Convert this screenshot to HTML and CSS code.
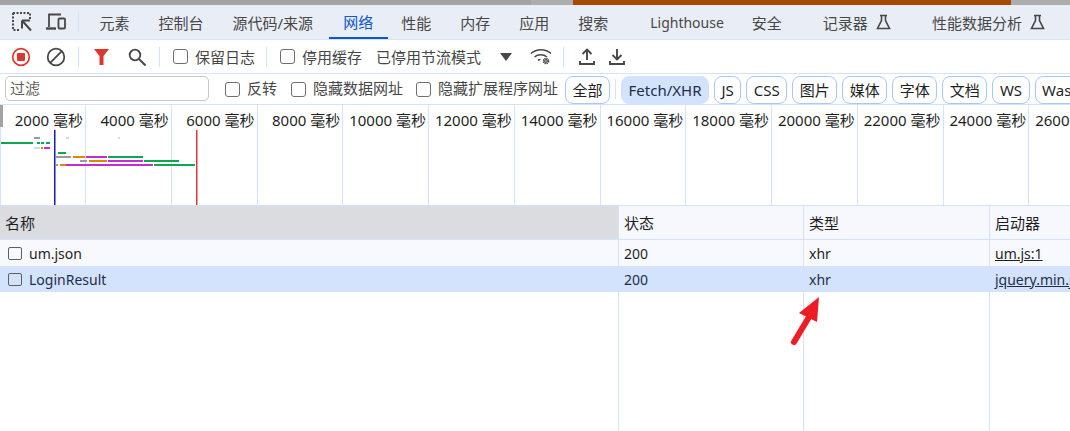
FILE: index.html
```html
<!DOCTYPE html>
<html lang="zh">
<head>
<meta charset="utf-8">
<title>网络</title>
<link rel="stylesheet" href="styles.css">
</head>
<body>
<div class="app">
  <div class="strip"><div class="strip-a"></div><div class="strip-b"></div><div class="strip-c"></div><div class="strip-d"></div></div>
  <div class="tabbar">
    <button class="ico first"><svg width="20" height="20" viewBox="0 0 20 20" fill="none" stroke="#474747"><path d="M1 1h17v6M1 1v17h6" stroke-width="2" stroke-dasharray="2 1.500"/><path d="M10 8.500h8M10 8.500v8M10.500 9l8.500 9.500" stroke-width="2"/></svg></button>
    <button class="ico second"><svg width="20" height="18" viewBox="0 0 20 18" fill="none" stroke="#474747" stroke-width="1.800"><path d="M3 14V1.500h12"/><path d="M0 15.500h10" stroke-width="2.400"/><rect x="12.500" y="5.500" width="6.500" height="10" rx="1"/></svg></button>
    <span class="sep tabsep"></span>
    <span class="tab">元素</span><span class="tab">控制台</span><span class="tab">源代码/来源</span><span class="tab active">网络</span><span class="tab">性能</span><span class="tab">内存</span><span class="tab">应用</span><span class="tab">搜索</span>
    <span class="tab far latin">Lighthouse</span><span class="tab">安全</span>
    <span class="tab far">记录器<svg class="flask" width="15" height="16" viewBox="0 0 15 16" fill="none" stroke="#474747" stroke-width="1.600"><path d="M4 1.500h7M5.500 1.500v5L1.500 14.500h12L9.500 6.500v-5"/></svg></span>
    <span class="tab far2">性能数据分析<svg class="flask" width="15" height="16" viewBox="0 0 15 16" fill="none" stroke="#474747" stroke-width="1.600"><path d="M4 1.500h7M5.500 1.500v5L1.500 14.500h12L9.500 6.500v-5"/></svg></span>
  </div>
  <div class="toolbar">
    <button class="ico rec"><svg width="20" height="20" viewBox="0 0 20 20"><circle cx="10" cy="10" r="8.300" fill="none" stroke="#dc362e" stroke-width="1.700"/><rect x="6" y="6" width="8" height="8" rx="1" fill="#dc362e"/></svg></button>
    <button class="ico clear"><svg width="20" height="20" viewBox="0 0 20 20" fill="none" stroke="#474747" stroke-width="1.800"><circle cx="10" cy="10" r="8.300"/><path d="M4.200 15.800L15.800 4.200"/></svg></button>
    <span class="sep s1"></span>
    <button class="ico funnel"><svg width="15" height="16" viewBox="0 0 15 16"><path d="M0 0h15l-5.500 7v9h-4v-9z" fill="#dc362e"/></svg></button>
    <button class="ico search"><svg width="18" height="18" viewBox="0 0 18 18" fill="none" stroke="#474747" stroke-width="1.800"><circle cx="7" cy="7" r="5.300"/><path d="M11 11l6.500 6.500" stroke-width="2"/></svg></button>
    <span class="sep s2"></span>
    <label class="check c1"><span class="box"></span>保留日志</label>
    <span class="sep s3"></span>
    <label class="check c2"><span class="box"></span>停用缓存</label>
    <span class="throttle">已停用节流模式</span>
    <span class="caret"></span>
    <button class="ico wifi"><svg width="22" height="18" viewBox="0 0 22 18" fill="none" stroke="#474747" stroke-width="1.600"><path d="M1 5.500c5.500-5 14.500-5 20 0M4.500 9c3.500-3 9-3 12.500 0M8 12.500c.8-.8 1.700-1 2.500-1"/><circle cx="16" cy="13" r="1.300" stroke-width="1.200"/><circle cx="16" cy="13" r="2.600" stroke-width="1.400" stroke-dasharray="1.400 .65"/></svg></button>
    <span class="sep s4"></span>
    <button class="ico up"><svg width="16" height="18" viewBox="0 0 16 18" fill="none" stroke="#474747" stroke-width="1.900"><path d="M8 12V2M3.500 6L8 1.500 12.500 6M1 13v3h14v-3"/></svg></button>
    <button class="ico down"><svg width="16" height="18" viewBox="0 0 16 18" fill="none" stroke="#474747" stroke-width="1.900"><path d="M8 1v10.500M3.500 7L8 11.500 12.500 7M1 13v3h14v-3"/></svg></button>
  </div>
  <div class="filterbar">
    <div class="filter-input">过滤</div>
    <label class="check f1"><span class="box"></span>反转</label>
    <label class="check f2"><span class="box"></span>隐藏数据网址</label>
    <label class="check f3"><span class="box"></span>隐藏扩展程序网址</label>
    <span class="chip all">全部</span>
    <span class="sep s5"></span>
    <span class="chip on">Fetch/XHR</span><span class="chip">JS</span><span class="chip">CSS</span><span class="chip">图片</span><span class="chip">媒体</span><span class="chip">字体</span><span class="chip">文档</span><span class="chip">WS</span><span class="chip">Wasm</span>
  </div>
  <div class="overview">
    <div class="ticks">
      <span class="tick first-tick">2000 毫秒</span><span class="tick">4000 毫秒</span><span class="tick">6000 毫秒</span><span class="tick">8000 毫秒</span><span class="tick">10000 毫秒</span><span class="tick">12000 毫秒</span><span class="tick">14000 毫秒</span><span class="tick">16000 毫秒</span><span class="tick">18000 毫秒</span><span class="tick">20000 毫秒</span><span class="tick">22000 毫秒</span><span class="tick">24000 毫秒</span><span class="tick">26000 毫秒</span>
    </div>
    <span class="handle"></span>
    <svg class="bars" width="260" height="75" viewBox="0 0 260 75">
      <g fill="#9a9a9a"><rect x="34" y="7" width="6" height="2"/><rect x="56" y="26" width="15" height="2"/><rect x="80" y="30" width="7" height="2"/><rect x="56" y="34" width="2" height="2"/></g>
      <g fill="#d8d8d8"><rect x="34" y="17" width="6" height="2"/><rect x="66" y="7" width="3" height="2"/><rect x="118" y="7" width="2" height="2"/></g>
      <g fill="#0ca84f"><rect x="1" y="12" width="32" height="2"/><rect x="37" y="12" width="3" height="2"/><rect x="41" y="12" width="3" height="2"/><rect x="46" y="12" width="4" height="2"/><rect x="58" y="22" width="8" height="2"/><rect x="108" y="26" width="35" height="2"/><rect x="144" y="30" width="35" height="2"/><rect x="154" y="34" width="41" height="2"/></g>
      <g fill="#e08600"><rect x="41" y="17" width="2" height="2"/><rect x="73" y="26" width="12" height="2"/><rect x="89" y="30" width="18" height="2"/><rect x="60" y="34" width="6" height="2"/></g>
      <g fill="#c22cd6"><rect x="44" y="17" width="6" height="2"/><rect x="86" y="26" width="21" height="2"/><rect x="108" y="30" width="35" height="2"/><rect x="66" y="34" width="87" height="2"/></g>
      <rect x="54" y="0" width="1.500" height="75" fill="#1a1ab8"/>
      <rect x="196" y="0" width="1.500" height="75" fill="#e0383e"/>
    </svg>
  </div>
  <div class="table">
    <div class="row head"><div class="cell name sorted">名称</div><div class="cell">状态</div><div class="cell">类型</div><div class="cell">启动器</div></div>
    <div class="row odd"><div class="cell name"><span class="doc"></span>um.json</div><div class="cell">200</div><div class="cell">xhr</div><div class="cell"><a class="link">um.js:1</a></div></div>
    <div class="row sel"><div class="cell name"><span class="doc"></span>LoginResult</div><div class="cell">200</div><div class="cell">xhr</div><div class="cell"><a class="link">jquery.min.js:2</a></div></div>
    <div class="row fill"><div class="cell name"></div><div class="cell"></div><div class="cell"></div><div class="cell"></div></div>
  </div>
  <svg class="arrow" width="40" height="60" viewBox="0 0 40 60"><path d="M4 47L19 22" stroke="#ee1c25" stroke-width="6" stroke-linecap="round" fill="none"/><path d="M29 2L9 18L27 27z" fill="#ee1c25"/></svg>
</div>
</body>
</html>
```
FILE: styles.css
```css
* { box-sizing: border-box; }
html, body { margin: 0; padding: 0; }
body { width: 1070px; height: 431px; overflow: hidden; background: #fff; font-family: "Noto Sans", "Noto Sans CJK SC", sans-serif; color: #1f1f1f; }
button { border: 0; background: none; padding: 0; display: flex; align-items: center; justify-content: center; }
.app { position: relative; width: 1070px; height: 431px; display: flex; flex-direction: column; overflow: hidden; }
.strip { height: 5px; display: flex; flex: none; }
.strip-a { width: 531px; background: #a3a3a3; }
.strip-b { width: 42px; background: #adadad; }
.strip-c { width: 438px; background: #a54a00; }
.strip-d { flex: 1; background: #adadad; }
.tabbar { height: 35px; flex: none; display: flex; align-items: center; background: #e9edf6; border-bottom: 1px solid #d3e3fd; font-size: 15px; color: #474747; white-space: nowrap; }
.ico.first { margin-left: 12px; width: 20px; }
.ico.second { margin-left: 14px; width: 20px; }
.sep { width: 1px; height: 20px; background: #d3e3fd; flex: none; }
.tabsep { margin-left: 12px; }
.tab { height: 34px; padding: 0 14.500px; display: flex; align-items: center; flex: none; }
.tabsep + .tab { margin-left: 6px; }
.tab.active { color: #0b57d0; border-bottom: 2px solid #0b57d0; margin-left: 1px; margin-right: -1px; }
.tab.far { margin-left: 12px; }
.tab.latin { font-size: 14px; margin-left: 13px; margin-right: -1px; }
.tab.far2 { margin-left: 12px; }
.flask { margin-left: 8px; }
.toolbar { height: 34px; flex: none; display: flex; align-items: center; border-bottom: 1px solid #d3e3fd; font-size: 15px; color: #474747; white-space: nowrap; }
.rec { margin-left: 11px; width: 20px; }
.clear { margin-left: 15px; width: 20px; }
.s1 { margin-left: 12px; }
.funnel { margin-left: 15px; width: 15px; }
.search { margin-left: 19px; width: 18px; }
.s2 { margin-left: 13px; }
.check { display: flex; align-items: center; flex: none; }
.box { width: 15px; height: 15px; border: 1.500px solid #6f6f6f; border-radius: 3px; margin-right: 7px; flex: none; background: #fff; }
.c1 { margin-left: 13px; }
.s3 { margin-left: 11px; }
.c2 { margin-left: 13px; }
.throttle { margin-left: 14px; }
.caret { margin-left: 19px; width: 0; height: 0; border: 6px solid transparent; border-top: 8px solid #474747; border-bottom: 0; }
.wifi { margin-left: 18px; width: 22px; }
.s4 { margin-left: 11px; }
.up { margin-left: 15px; width: 16px; }
.down { margin-left: 14px; width: 16px; }
.filterbar { height: 31px; flex: none; display: flex; align-items: center; font-size: 15px; line-height: 1.300; color: #474747; white-space: nowrap; border-bottom: 1px solid #d3e3fd; overflow: hidden; }
.filter-input { align-self: flex-start; margin: 2px 0 0 5px; width: 204px; height: 25px; border: 1px solid #c4c7c5; border-radius: 5px; padding-left: 4px; line-height: 23px; color: #5f5f5f; flex: none; }
.f1 { margin-left: 16px; }
.f2 { margin-left: 14px; }
.f3 { margin-left: 13px; }
.chip { flex: none; align-self: flex-start; margin: 2px 0 0 5px; height: 28px; line-height: 26px; padding: 0 6.500px; border: 1px solid #a8c7fa; border-radius: 8px; color: #1f1f1f; }
.chip.all { margin-left: 7px; }
.s5 { margin-left: 5px; }
.chip.on { background: #d3e3fd; border-color: #d3e3fd; color: #1f2e4a; }
.overview { position: relative; height: 101px; flex: none; border-bottom: 1px solid #d3e3fd; }
.ticks { display: flex; height: 100px; }
.tick { flex: none; width: 85.750px; border-right: 1px solid #d3e3fd; font-size: 15px; color: #1f1f1f; text-align: right; padding: 4px 2px 0 0; white-space: nowrap; height: 100px; }
.first-tick { width: 86px; border-left: 1px solid #d3e3fd; }
.handle { position: absolute; left: 0; top: 0; width: 3px; height: 22px; background: #a3a3a3; }
.bars { position: absolute; left: 0; top: 25px; }
.table { flex: 1; display: flex; flex-direction: column; min-height: 0; font-size: 14px; }
.row { display: grid; grid-template-columns: 618px 185px 186px 1fr; flex: none; white-space: nowrap; }
.cell { padding-left: 5px; border-left: 1px solid #d3e3fd; overflow: hidden; display: flex; align-items: center; }
.cell.name { border-left: 0; }
.head { height: 34px; background: #f7f8fd; border-bottom: 1px solid #d3e3fd; color: #1f1f1f; font-size: 15px; }
.sorted { background: #dadce0; padding-left: 5px; }
.odd { height: 26px; background: #f8f9fe; }
.sel { height: 26px; background: #d3e3fd; color: #1f2e4a; }
.fill { flex: 1; }
.doc { width: 14px; height: 13px; border: 1.500px solid #5f5f5f; border-radius: 2px; margin: 0 7px 0 3px; flex: none; }
.link { text-decoration: underline; }
.arrow { position: absolute; left: 790px; top: 295px; }
```
